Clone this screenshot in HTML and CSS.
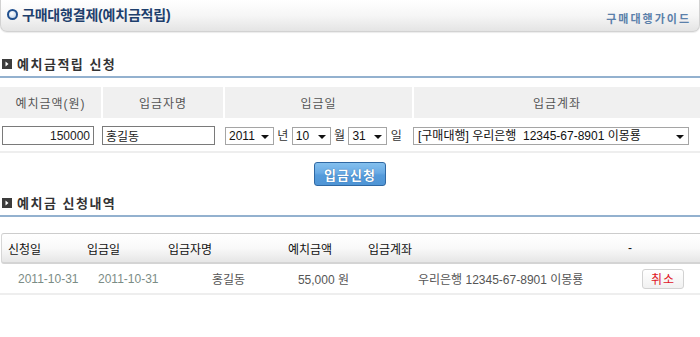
FILE: index.html
```html
<!DOCTYPE html>
<html lang="ko">
<head>
    <meta charset="UTF-8">
    <meta name="viewport" content="width=device-width, initial-scale=1.0">
    <title>구매대행결제(예치금적립)</title>
    <link rel="stylesheet" href="styles.css">
</head>
<body>
    <div class="top-bar">
        <h1 class="page-title"><span class="dot"></span>구매대행결제(예치금적립)</h1>
        <a class="guide" href="#">구매대행가이드</a>
    </div>

    <h2 class="sec-title">
        <svg class="sec-icon" width="10" height="10" viewBox="0 0 10 10"><rect width="10" height="10" fill="#3c3c3c"/><path d="M3.5 2.5 L6.5 5 L3.5 7.5 Z" fill="#fff"/></svg>
        예치금적립 신청
    </h2>

    <table class="deposit-form">
        <tr>
            <th class="c1">예치금액(원)</th>
            <th class="c2">입금자명</th>
            <th class="c3">입금일</th>
            <th class="c4">입금계좌</th>
        </tr>
        <tr>
            <td class="c1"><input type="text" class="amount" value="150000"></td>
            <td class="c2"><input type="text" class="name" value="홍길동"></td>
            <td class="c3">
                <span class="sel w-year"><select><option>2011</option></select></span> 년
                <span class="sel w-day"><select><option>10</option></select></span> 월
                <span class="sel w-day"><select><option>31</option></select></span> 일
            </td>
            <td class="c4">
                <span class="sel w-acct"><select><option>[구매대행] 우리은행&nbsp; 12345-67-8901 이몽룡</option></select></span>
            </td>
        </tr>
    </table>

    <div class="btn-row">
        <button type="button" class="btn-submit">입금신청</button>
    </div>

    <h2 class="sec-title">
        <svg class="sec-icon" width="10" height="10" viewBox="0 0 10 10"><rect width="10" height="10" fill="#3c3c3c"/><path d="M3.5 2.5 L6.5 5 L3.5 7.5 Z" fill="#fff"/></svg>
        예치금 신청내역
    </h2>

    <div class="history">
        <div class="history-head">
            <span class="h1">신청일</span>
            <span class="h2">입금일</span>
            <span class="h3">입금자명</span>
            <span class="h4">예치금액</span>
            <span class="h5">입금계좌</span>
            <span class="h6">-</span>
        </div>
        <div class="history-row">
            <span class="d1 date">2011-10-31</span>
            <span class="d2 date">2011-10-31</span>
            <span class="d3">홍길동</span>
            <span class="d4">55,000 원</span>
            <span class="d5">우리은행 12345-67-8901 이몽룡</span>
            <span class="d6"><button type="button" class="btn-cancel">취소</button></span>
        </div>
    </div>
</body>
</html>
```

FILE: styles.css
```css
body {
    font-family: 'Liberation Sans', 'Noto Sans CJK KR', sans-serif;
    font-size: 12px;
    color: #333;
    background-color: #fff;
    margin: 0;
    width: 700px;
}

.top-bar {
    display: flex;
    justify-content: space-between;
    align-items: flex-end;
    height: 32px;
    padding: 0 8px 0 6px;
    background: linear-gradient(#fff 0%, #f6f6f6 50%, #e4e4e4 100%);
    border: 1px solid #d2d2d2;
    border-top: none;
    border-radius: 0 0 7px 7px;
    box-sizing: border-box;
    box-shadow: 0 1px 1px rgba(0, 0, 0, 0.08);
}

.page-title {
    display: flex;
    align-items: center;
    gap: 4px;
    margin: 0 0 7px 0;
    font-size: 14px;
    font-weight: bold;
    color: #1e3f6d;
    letter-spacing: -0.2px;
}

.dot {
    width: 7px;
    height: 7px;
    border: 2px solid #1f4f8e;
    border-radius: 50%;
    background: radial-gradient(circle at 40% 35%, #fff, #b9cde4);
}

.guide {
    margin-bottom: 5px;
    font-size: 11px;
    font-weight: bold;
    color: #5b80aa;
    letter-spacing: 2px;
    text-decoration: none;
}

.sec-title {
    display: flex;
    align-items: center;
    gap: 5px;
    margin: 22px 0 0 0;
    padding: 0 0 3px 2px;
    font-size: 13px;
    font-weight: bold;
    letter-spacing: 1.5px;
    color: #333;
    border-bottom: 2px solid #93b1cf;
}

.deposit-form {
    width: 700px;
    margin-top: 7px;
    border-collapse: collapse;
    border-top: 2px solid #f0f0f0;
}

.deposit-form th {
    height: 31px;
    padding: 0;
    background-color: #f0f0f0;
    border-top: 2px solid #fff;
    border-left: 2px solid #fff;
    font-weight: normal;
    font-size: 12px;
    color: #555;
    letter-spacing: 1px;
}

.deposit-form th.c1 {
    border-left: none;
}

.deposit-form td {
    height: 31px;
    padding: 0;
    border-top: 2px solid #fff;
    border-bottom: 2px solid #eee;
    white-space: nowrap;
}

.c1 { width: 100px; }
.c2 { width: 120px; }
.c3 { width: 187px; }

.deposit-form td.c1 { padding-left: 2px; }
.deposit-form td.c2 { padding-left: 0; }
.deposit-form td.c3 { padding-left: 1px; color: #333; }

input[type="text"] {
    height: 19px;
    padding: 0 3px;
    border: 1px solid #7a7a7a;
    font-family: 'Liberation Sans', 'Noto Sans CJK KR', sans-serif;
    font-size: 12px;
    color: #222;
    box-sizing: border-box;
    vertical-align: middle;
}

.amount {
    width: 92px;
    text-align: right;
}

.name {
    width: 113px;
}

.sel {
    position: relative;
    display: inline-block;
    vertical-align: middle;
}

.sel::after {
    content: "";
    position: absolute;
    right: 5px;
    top: 8px;
    border-left: 4px solid transparent;
    border-right: 4px solid transparent;
    border-top: 4px solid #111;
    pointer-events: none;
}

.sel select {
    -webkit-appearance: none;
    appearance: none;
    height: 18px;
    padding: 0 0 0 3px;
    border: 1px solid #a5a5a5;
    border-radius: 0;
    background-color: #fff;
    font-family: 'Liberation Sans', 'Noto Sans CJK KR', sans-serif;
    font-size: 12px;
    color: #111;
}

.w-year select { width: 49px; }
.w-day select { width: 39px; }
.w-acct select { width: 276px; padding-left: 4px; }

.btn-row {
    display: flex;
    justify-content: center;
    margin-top: 9px;
}

.btn-submit {
    width: 72px;
    height: 24px;
    padding: 0;
    background: linear-gradient(#84c0ee 0%, #69aae4 45%, #559bdb 55%, #4f95d5 100%);
    border: 1px solid #2f68a3;
    border-radius: 3px;
    color: #fff;
    font-family: 'Noto Sans CJK KR', sans-serif;
    font-size: 13px;
    font-weight: bold;
    letter-spacing: 1px;
    text-shadow: 0 0 1px #2a5c94;
    cursor: pointer;
}

.btn-row + .sec-title {
    margin-top: 7px;
}

.history {
    margin-top: 16px;
}

.history-head,
.history-row {
    display: grid;
    grid-template-columns: 79px 81px 120px 80px 259px 1fr;
    align-items: center;
}

.history-head {
    height: 28px;
    margin-left: 1px;
    background: linear-gradient(#fff 0%, #f9f9f9 50%, #e6e6e6 100%);
    border-top: 1px solid #ccc;
    border-left: 1px solid #d6d6d6;
    border-bottom: 2px solid #d4d4d4;
    border-radius: 3px 0 0 3px;
    color: #111;
    font-size: 12px;
}

.history-head span {
    padding-left: 6px;
}

.history-head .h6 {
    padding-left: 7px;
}

.history-row {
    height: 29px;
    border-bottom: 2px solid #eee;
    color: #555;
    font-size: 12px;
}

.date {
    color: #7b8c86;
}

.d1 { padding-left: 18px; }
.d2 { padding-left: 19px; }
.d3 { padding-left: 52px; }
.d4 { text-align: right; padding-right: 11px; }
.d5 { padding-left: 58px; }
.d6 { padding-left: 23px; }

.btn-cancel {
    width: 42px;
    height: 20px;
    padding: 0;
    background: linear-gradient(#fff, #f1f1f1);
    border: 1px solid #d2d2d2;
    border-radius: 3px;
    color: #e0141e;
    font-family: 'Noto Sans CJK KR', sans-serif;
    font-size: 12px;
    letter-spacing: 1px;
    cursor: pointer;
}
```
